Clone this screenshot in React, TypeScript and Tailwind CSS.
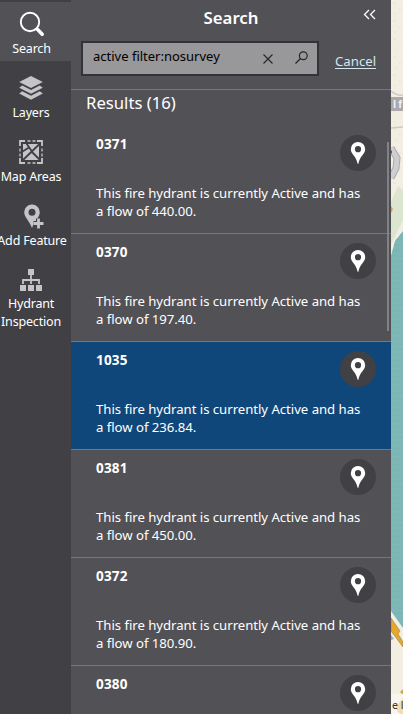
import React from "react";

type Result = { id: string; flow?: string; selected?: boolean };

const results: Result[] = [
  { id: "0371", flow: "440.00" },
  { id: "0370", flow: "197.40" },
  { id: "1035", flow: "236.84", selected: true },
  { id: "0381", flow: "450.00" },
  { id: "0372", flow: "180.90" },
  { id: "0380" },
];

function SearchIcon() {
  return (
    <svg width="26" height="26" viewBox="0 0 26 26" fill="none" stroke="#fff">
      <circle cx="11" cy="11" r="9.2" strokeWidth="1.9" />
      <path d="M17.2 17.2l1.5 1.5" strokeWidth="2" />
      <path d="M18.6 18.6l4.6 4.6" strokeWidth="3.6" strokeLinecap="round" />
    </svg>
  );
}

function LayersIcon() {
  return (
    <svg width="24" height="26" viewBox="0 0 24 26" fill="#c5c4c9">
      <path d="M12 1l11.8 6L12 13 .2 7z" />
      <path d="M3.2 10.4L.2 12.8l11.8 6 11.8-6-3-2.4L12 14.9z" />
      <path d="M3.2 16.2l-3 2.4 11.8 6.2 11.8-6.2-3-2.4-8.8 4.5z" />
    </svg>
  );
}

function MapAreasIcon() {
  return (
    <svg width="24" height="24" viewBox="0 0 24 24" fill="none" stroke="#c5c4c9">
      <path d="M1 6V1h5M18 1h5v5M23 18v5h-5M6 23H1v-5" strokeWidth="1.8" />
      <path d="M8.5 1h3M13.5 1h3M8.5 23h3M13.5 23h3M1 8.5v3M1 13.5v3M23 8.5v3M23 13.5v3" strokeWidth="1.3" />
      <path d="M4 4h16v16H4z" fill="#c5c4c9" stroke="none" />
      <path d="M3.5 20.5L20.5 4M3.5 11.5L10 7.500M7.500 3.500L13 11.500M12.500 11.500L20.500 19.500" stroke="#414045" strokeWidth="1.8" />
    </svg>
  );
}

function AddFeatureIcon() {
  return (
    <svg width="22" height="25" viewBox="0 0 22 25" fill="#c5c4c9">
      <path
        fillRule="evenodd"
        d="M9 .5a7.8 7.8 0 0 0-7.8 7.8c0 5 5.3 8.5 7.8 15.7C11.5 16.8 16.8 13.3 16.8 8.3A7.8 7.8 0 0 0 9 .5zm0 4.3a3.5 3.5 0 1 1 0 7 3.5 3.5 0 0 1 0-7z"
      />
      <path d="M15.5 14.5v10M10.5 19.5h10" stroke="#414045" strokeWidth="5" />
      <path d="M15.5 14.5v10M10.5 19.5h10" stroke="#c5c4c9" strokeWidth="2.8" />
    </svg>
  );
}

function InspectionIcon() {
  return (
    <svg width="22" height="22" viewBox="0 0 22 22" fill="#c5c4c9">
      <path d="M8 0h6v6H8zM0 16h6v6H0zM8 16h6v6H8zM16 16h6v6h-6z" />
      <path d="M11 6v9M3 15v-4h16v4" fill="none" stroke="#c5c4c9" strokeWidth="1.8" />
    </svg>
  );
}

function PinButton() {
  return (
    <div className="flex size-9 shrink-0 items-center justify-center rounded-full bg-[#414045]">
      <svg width="16" height="22" viewBox="0 0 16 22" fill="#fff">
        <path
          fillRule="evenodd"
          d="M8 0a7.2 7.2 0 0 0-7.2 7.2c0 4.8 5.6 6.8 6.8 14.6h.8C9.6 14 15.2 12 15.2 7.2A7.2 7.2 0 0 0 8 0zm0 4.1a3.1 3.1 0 1 1 0 6.2 3.1 3.1 0 0 1 0-6.2z"
        />
      </svg>
    </div>
  );
}

function ResultCard({ item }: { item: Result }) {
  return (
    <div
      className={
        "h-[108px] shrink-0 border-b border-[#77767b] pl-[25px] pr-[15px] " +
        (item.selected ? "bg-[#10477a]" : "bg-[#525156]")
      }
    >
      <div className="flex h-[58px] justify-between pt-[9px]">
        <h3 className="text-[13.5px] font-bold leading-[18px] tracking-[0.2px]">{item.id}</h3>
        <PinButton />
      </div>
      {item.flow && (
        <p className="whitespace-nowrap text-[13.2px] leading-[18px] tracking-[-0.04px]">
          This fire hydrant is currently Active and has
          <br />a flow of {item.flow}.
        </p>
      )}
    </div>
  );
}

function NavItem({
  icon,
  children,
  className,
}: {
  icon: React.ReactNode;
  children: React.ReactNode;
  className: string;
}) {
  return (
    <div className={"flex shrink-0 flex-col items-center " + className}>
      <div className="flex h-[26px] items-center justify-center">{icon}</div>
      <div className="mt-[3px] whitespace-nowrap text-center text-[12.5px] leading-[18px] tracking-[-0.18px]">
        {children}
      </div>
    </div>
  );
}

function MapStrip() {
  return (
    <svg width="12" height="714" viewBox="0 0 12 714" className="shrink-0">
      <defs>
        <pattern id="sand" width="12" height="18" patternUnits="userSpaceOnUse">
          <path d="M2 3h3M8 9h2M3 14h2" stroke="#ebe6d9" strokeWidth="1.5" />
        </pattern>
        <pattern id="waves" width="12" height="11" patternUnits="userSpaceOnUse">
          <path d="M0 3c4-2 7 2 12 0M0 8c5 2 8-1 12 0" fill="none" stroke="#77b3b3" strokeWidth="1" />
        </pattern>
      </defs>
      <path d="M0 0h12v714H0z" fill="#f2eee2" />
      <path d="M0 0h12v714H0z" fill="url(#sand)" />
      <path d="M0 91q6 5 12 4M0 128l12-1" fill="none" stroke="#cbc9cb" strokeWidth="1.5" />
      <path d="M0 97h12v14H0z" fill="#aaa9ae" />
      <text x="2" y="108" fontSize="11" fontWeight="bold" fontFamily="Liberation Sans, sans-serif" fill="#f5f4f0" textLength="9">lf</text>
      <path d="M0 148l6 10-1 10-5 10" fill="none" stroke="#aaa9af" strokeWidth="7" />
      <path d="M0 148l6 10-1 10-5 10" fill="none" stroke="#cfced3" strokeWidth="5" />
      <path d="M0 150l1 2-1 2z" fill="#38373c" />
      <path d="M7 186l5 4v30L0 244v-42z" fill="#dce5d0" />
      <path d="M0 206l2 3-2 4z" fill="#dfa32f" />
      <path d="M12 231L4 241 0 256v356l12 17z" fill="#7db8b7" />
      <path d="M12 231L4 241 0 256v356l12 17z" fill="url(#waves)" />
      <path d="M0 611l12 17v86H0z" fill="#f2eee2" />
      <path d="M0 635l3 4-3 1z" fill="#7db8b7" />
      <path d="M0 618l9 13-2 3 5 8v5L0 631z" fill="#e7a728" stroke="#9f8760" strokeWidth=".7" />
      <path d="M12 689l-3 3 3 3z" fill="#d4a44f" />
      <path d="M0 694h12v20H0z" fill="#f8f5ef" />
      <path d="M12 698l-8 10 5 6h3z" fill="#f4dcae" />
      <text x="1" y="709" fontSize="10.5" fontFamily="Noto Sans, sans-serif" fill="#333">e l</text>
    </svg>
  );
}

export default function App() {
  return (
    <div className="flex h-[714px] w-[403px] overflow-hidden bg-[#525156] font-['Noto_Sans','Open_Sans',sans-serif] text-white">
      <nav className="flex w-[71px] shrink-0 flex-col overflow-hidden bg-[#414045]">
        <div className="h-[2px] shrink-0" />
        <NavItem className="h-[59px] bg-[#525156] pt-[9px] pr-[8px]" icon={<SearchIcon />}>
          Search
        </NavItem>
        <NavItem className="h-16 pt-[14px] pr-[9px]" icon={<LayersIcon />}>Layers</NavItem>
        <NavItem className="h-16 pt-[14px] pr-[9px]" icon={<MapAreasIcon />}>Map Areas</NavItem>
        <NavItem className="h-16 pt-[14px] pr-[7px]" icon={<div className="pl-[4px]"><AddFeatureIcon /></div>}>Add Feature</NavItem>
        <NavItem className="h-20 pt-[13px] pr-[9px]" icon={<div className="pt-[2px]"><InspectionIcon /></div>}>
          Hydrant<br />Inspection
        </NavItem>
      </nav>
      <main className="relative flex w-80 shrink-0 flex-col overflow-hidden">
        <header className="h-[90px] shrink-0 border-b border-[#77767b]">
          <div className="grid h-[41px] grid-cols-[40px_1fr_40px]">
            <h1 className="col-start-2 pt-[6px] text-center text-[16.8px] font-semibold leading-6">Search</h1>
            <svg width="14" height="12" viewBox="0 0 14 12" className="ml-[12px] mt-[9px]" fill="none" stroke="#fff" strokeWidth="1.3">
              <path d="M6 1L1.5 5.5 6 10M12 1L7.5 5.5 12 10" />
            </svg>
          </div>
          <div className="flex pl-[10px]">
            <div className="flex h-[35px] w-[238px] shrink-0 items-center border-2 border-[#333238] bg-[#98979a] pl-[10px] text-[13px] text-black">
              <span className="mt-[-4px] whitespace-nowrap">active filter:nosurvey</span>
              <svg width="10" height="10" viewBox="0 0 10 10" className="ml-auto mr-[22px] mt-px shrink-0" stroke="#252528" strokeWidth="1.1">
                <path d="M.5.5l9 9M9.5.5l-9 9" />
              </svg>
              <svg width="13" height="13" viewBox="0 0 13 13" className="mr-[9px] shrink-0 -translate-y-px" fill="none" stroke="#252528" strokeWidth="1.2">
                <circle cx="8.3" cy="4.7" r="3.9" />
                <path d="M5.5 7.5L.5 12.5" />
              </svg>
            </div>
            <span className="ml-4 mt-[11px] h-[17px] whitespace-nowrap border-b border-[#d3e6f1] text-[13.2px] leading-[18px] text-[#d3e6f1]">
              Cancel
            </span>
          </div>
        </header>
        <h2 className="h-9 shrink-0 pl-[15px] pt-px text-[16.7px] leading-6">Results (16)</h2>
        {results.map((item) => (
          <ResultCard key={item.id} item={item} />
        ))}
        <div className="absolute right-[2px] top-[142px] h-[189px] w-[2px] bg-[#828186]" />
      </main>
      <MapStrip />
    </div>
  );
}
